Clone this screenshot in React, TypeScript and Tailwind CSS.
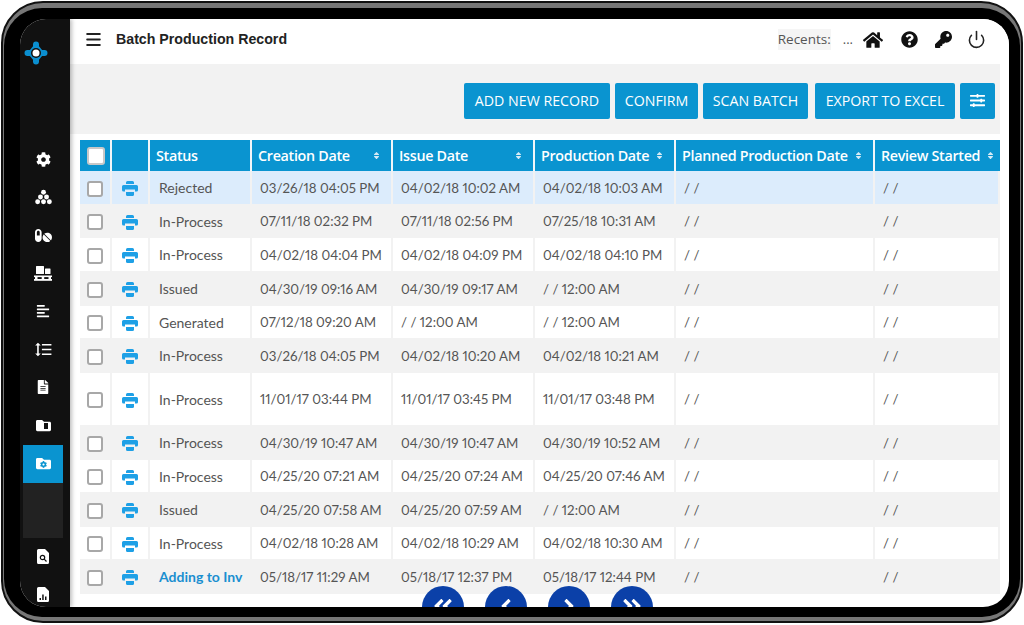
import { FaCog, FaHome, FaKey, FaPills, FaAlignLeft, FaQuestionCircle, FaSlidersH, FaSort, FaFileAlt, FaFolder, FaAngleLeft, FaAngleRight, FaAngleDoubleLeft, FaAngleDoubleRight } from "react-icons/fa";
import { MdFormatLineSpacing } from "react-icons/md";
import { Menu, Power } from "lucide-react";

const rows = [
  { status: "Rejected", created: "03/26/18 04:05 PM", issued: "04/02/18 10:02 AM", produced: "04/02/18 10:03 AM", h: "h-[34px]", bg: "bg-[#dcecfc]" },
  { status: "In-Process", created: "07/11/18 02:32 PM", issued: "07/11/18 02:56 PM", produced: "07/25/18 10:31 AM", h: "h-[33px]", bg: "bg-[#f2f2f2]" },
  { status: "In-Process", created: "04/02/18 04:04 PM", issued: "04/02/18 04:09 PM", produced: "04/02/18 04:10 PM", h: "h-[34px]", bg: "bg-white" },
  { status: "Issued", created: "04/30/19 09:16 AM", issued: "04/30/19 09:17 AM", produced: "/ / 12:00 AM", h: "h-[34px]", bg: "bg-[#f2f2f2]" },
  { status: "Generated", created: "07/12/18 09:20 AM", issued: "/ / 12:00 AM", produced: "/ / 12:00 AM", h: "h-[33px]", bg: "bg-white" },
  { status: "In-Process", created: "03/26/18 04:05 PM", issued: "04/02/18 10:20 AM", produced: "04/02/18 10:21 AM", h: "h-[34px]", bg: "bg-[#f2f2f2]" },
  { status: "In-Process", created: "11/01/17 03:44 PM", issued: "11/01/17 03:45 PM", produced: "11/01/17 03:48 PM", h: "h-[53px]", bg: "bg-white" },
  { status: "In-Process", created: "04/30/19 10:47 AM", issued: "04/30/19 10:47 AM", produced: "04/30/19 10:52 AM", h: "h-[34px]", bg: "bg-[#f2f2f2]" },
  { status: "In-Process", created: "04/25/20 07:21 AM", issued: "04/25/20 07:24 AM", produced: "04/25/20 07:46 AM", h: "h-[33px]", bg: "bg-white" },
  { status: "Issued", created: "04/25/20 07:58 AM", issued: "04/25/20 07:59 AM", produced: "/ / 12:00 AM", h: "h-[34px]", bg: "bg-[#f2f2f2]" },
  { status: "In-Process", created: "04/02/18 10:28 AM", issued: "04/02/18 10:29 AM", produced: "04/02/18 10:30 AM", h: "h-[33px]", bg: "bg-white" },
  { status: "Adding to Inv", created: "05/18/17 11:29 AM", issued: "05/18/17 12:37 PM", produced: "05/18/17 12:44 PM", h: "h-[34px]", bg: "bg-[#f2f2f2]" },
];

function Logo() {
  return (
    <svg viewBox="0 0 24 24" className="w-[24px] h-[24px]">
      <path d="M12 3.500 L12 20.500 M3.500 12 L20.500 12" stroke="#0b8fd0" strokeWidth="6" strokeLinecap="round" />
      <path d="M12 4 18.500 12 12 20 5.500 12z" fill="#0b8fd0" stroke="#0b8fd0" strokeWidth="3" strokeLinejoin="round" />
      <circle cx="12" cy="12" r="5" fill="#111" />
      <circle cx="12" cy="12" r="3.500" fill="#fff" />
    </svg>
  );
}

function Dots() {
  return (
    <svg viewBox="0 0 18 16" className="w-[17px] h-[16px]" fill="#fff">
      <circle cx="9" cy="3" r="2.600" />
      <circle cx="5.800" cy="8" r="2.600" />
      <circle cx="12.200" cy="8" r="2.600" />
      <circle cx="2.800" cy="13" r="2.600" />
      <circle cx="9" cy="13" r="2.600" />
      <circle cx="15.200" cy="13" r="2.600" />
    </svg>
  );
}

function Pallet() {
  return (
    <svg viewBox="0 0 18 15" className="w-[18px] h-[15px]" fill="#fff">
      <rect x="2" y="0" width="8" height="8" rx="0.500" />
      <rect x="11" y="2.500" width="5.500" height="5.500" rx="0.500" />
      <rect x="0" y="9.500" width="18" height="1.600" />
      <rect x="0" y="13" width="18" height="1.800" />
      <rect x="1" y="11" width="2.500" height="2" />
      <rect x="7.700" y="11" width="2.500" height="2" />
      <rect x="14.500" y="11" width="2.500" height="2" />
    </svg>
  );
}

function PrintIcon() {
  return (
    <svg viewBox="0 0 16 15" className="w-[16px] h-[15px]" fill="#1ea0e6">
      <path d="M4 3V1.500A1.500 1.500 0 0 1 5.500 0h5A1.500 1.500 0 0 1 12 1.500V3z" />
      <path d="M1.500 4h13A1.500 1.500 0 0 1 16 5.500V9a1.500 1.500 0 0 1-1.500 1.500H13V8.500H3v2H1.500A1.500 1.500 0 0 1 0 9V5.500A1.500 1.500 0 0 1 1.500 4z" />
      <path d="M4 11h8v2.500a1.500 1.500 0 0 1-1.500 1.500h-5A1.500 1.500 0 0 1 4 13.500z" />
    </svg>
  );
}

function FileIcon({ kind }: { kind: "search" | "chart" }) {
  return (
    <svg viewBox="0 0 12 15" className="w-[12px] h-[15px]">
      <path d="M0 1.500A1.500 1.500 0 0 1 1.500 0H8l4 4v9.500a1.500 1.500 0 0 1-1.500 1.500h-9A1.500 1.500 0 0 1 0 13.500z" fill="#fff" />
      {kind === "search" ? (
        <g fill="none" stroke="#111" strokeWidth="1.200">
          <circle cx="5.500" cy="8.500" r="2.200" />
          <path d="M7.200 10.200 9.500 12.500" />
        </g>
      ) : (
        <path d="M2.500 13V11h1.500v2zM5.200 13V7.500h1.500V13zM8 13V9.500h1.500V13z" fill="#111" />
      )}
    </svg>
  );
}

function FolderIcon({ kind }: { kind: "bookmark" | "cog" }) {
  return (
    <span className="relative flex items-center justify-center text-white text-[15px]">
      <FaFolder />
      {kind === "bookmark" ? (
        <span className="absolute left-[8px] top-[5px] w-[4px] h-[6px] bg-[#111]" />
      ) : (
        <FaCog className="absolute text-[#0a94d0] text-[7px] top-[5px]" />
      )}
    </span>
  );
}

function SideItem({ children, active }: { children: React.ReactNode; active?: boolean }) {
  return (
    <div className={`h-[38px] shrink-0 flex items-center justify-center pb-[2px] text-white ${active ? "bg-[#0a94d0]" : ""}`}>
      {children}
    </div>
  );
}

function Sidebar() {
  return (
    <aside className="w-[50px] shrink-0 bg-[#111] flex flex-col pl-[3px] pr-[7px] shadow-[2px_0_4px_rgba(0,0,0,0.25)] z-10">
      <div className="h-[122px] shrink-0 ml-[1px] pt-[22px]">
        <Logo />
      </div>
      <SideItem><FaCog className="text-[15px]" /></SideItem>
      <SideItem><Dots /></SideItem>
      <SideItem><FaPills className="text-[17px]" /></SideItem>
      <SideItem><Pallet /></SideItem>
      <SideItem><FaAlignLeft className="text-[14px]" /></SideItem>
      <SideItem><MdFormatLineSpacing className="text-[19px]" /></SideItem>
      <SideItem><FaFileAlt className="text-[14px]" /></SideItem>
      <SideItem><FolderIcon kind="bookmark" /></SideItem>
      <SideItem active><FolderIcon kind="cog" /></SideItem>
      <div className="h-[55px] shrink-0 bg-[#222]" />
      <SideItem><FileIcon kind="search" /></SideItem>
      <SideItem><FileIcon kind="chart" /></SideItem>
    </aside>
  );
}

function TopBar() {
  return (
    <header className="h-[45px] shrink-0 bg-white flex items-center pl-[14px] pr-[23px] pb-[4px]">
      <Menu className="w-[19px] h-[19px] text-[#222]" strokeWidth={2.4} />
      <h1 className="ml-[13px] text-[14.200px] font-bold text-[#222] font-['Liberation_Sans',sans-serif]">Batch Production Record</h1>
      <div className="ml-auto flex items-center">
        <span className="bg-[#f5f5f5] text-[13.500px] text-[#555] font-['Open_Sans',sans-serif]">Recents:</span>
        <span className="ml-[12px] text-[13px] text-[#555] font-['Open_Sans',sans-serif]">...</span>
        <FaHome className="ml-[10px] text-[20px] text-[#111]" />
        <FaQuestionCircle className="ml-[18px] text-[17px] text-[#111]" />
        <FaKey className="ml-[17px] text-[17px] text-[#111]" />
        <Power className="ml-[15px] w-[19px] h-[19px] text-[#222]" strokeWidth={2} />
      </div>
    </header>
  );
}

function ToolButton({ children, w }: { children: React.ReactNode; w: string }) {
  return (
    <button className={`${w} h-[36px] rounded-[2px] bg-[#0a94d0] text-white text-[14.200px] font-['Open_Sans',sans-serif] flex items-center justify-center pb-[1px]`}>
      {children}
    </button>
  );
}

function Th({ label, w, sort = true }: { label?: string; w: string; sort?: boolean }) {
  return (
    <th className={`${w} bg-[#0a94d0] border-r-2 border-[#f2f6f9] pl-[6px] pr-[10px] text-left text-white text-[14.300px] font-semibold font-['Open_Sans',sans-serif] tracking-[-0.3px] whitespace-nowrap last:border-r-0 last:pr-[5px]`}>
      {label && (
        <span className="flex items-center justify-between">
          {label}
          {sort && <FaSort className="text-[9px] text-[#d5eaf5]" />}
        </span>
      )}
    </th>
  );
}

function Check({ big }: { big?: boolean }) {
  return (
    <span className={`block rounded-[3px] bg-white border-2 ${big ? "w-[18px] h-[18px] border-[#c8c8c8]" : "w-[16px] h-[16px] border-[#a8a8a8]"}`} />
  );
}

function RecordTable() {
  const td = "border-r-2 border-b border-[#f2f2f2] whitespace-nowrap";
  const date = `${td} pl-[8px] pt-[2px] text-[13.300px]`;
  return (
    <table className="w-[920px] table-fixed border-separate border-spacing-0 text-[14px] text-[#555] proportional-nums font-['Lato',sans-serif]">
      <thead>
        <tr className="h-[31px]">
          <th className="w-[32px] bg-[#0a94d0] border-r-2 border-[#f2f6f9] pl-[7px]"><Check big /></th>
          <Th w="w-[38px]" />
          <Th w="w-[102px]" label="Status" sort={false} />
          <Th w="w-[141px]" label="Creation Date" />
          <Th w="w-[142px]" label="Issue Date" />
          <Th w="w-[141px]" label="Production Date" />
          <Th w="w-[199px]" label="Planned Production Date" />
          <Th w="w-[125px]" label="Review Started" />
        </tr>
      </thead>
      <tbody>
        {rows.map((r, i) => (
          <tr key={i} className={`${r.h} ${r.bg}`}>
            <td className={`${td} pl-[7px] pt-[2px]`}><Check /></td>
            <td className={`${td} pl-[10px] pt-[2px]`}><PrintIcon /></td>
            <td className={`${td} pl-[9px] ${r.status === "Adding to Inv" ? "text-[#1a8fd0] font-bold" : ""}`}>{r.status}</td>
            <td className={date}>{r.created}</td>
            <td className={date}>{r.issued}</td>
            <td className={date}>{r.produced}</td>
            <td className={date}>/ /</td>
            <td className={`${date} border-r-0`}>/ /</td>
          </tr>
        ))}
      </tbody>
    </table>
  );
}

function PageButton({ children }: { children: React.ReactNode }) {
  return (
    <button className="w-[42px] h-[42px] rounded-full bg-[#0b40a8] text-white text-[22px] flex items-center justify-center pb-[2px]">
      {children}
    </button>
  );
}

export default function App() {
  return (
    <div className="w-[1024px] h-[625px] bg-white overflow-hidden">
      <div className="w-[1022px] h-[622px] ml-[1px] mt-[1px] rounded-[42px] border-2 border-[#111] bg-[#777] pt-[5px] pl-[1px] pr-[1px] pb-[4px]">
        <div className="w-full h-full rounded-[38px] bg-black pt-[11px] pl-[16px] pr-[11px] pb-[10px]">
          <div className="relative w-full h-full rounded-[26px] overflow-hidden bg-white flex">
            <Sidebar />
            <main className="flex-1 min-w-0 flex flex-col">
              <TopBar />
              <div className="h-[70px] shrink-0 bg-[#f2f2f2] mr-[9px] flex justify-end items-start gap-[5px] pt-[19px] pr-[5px]">
                <ToolButton w="w-[146px]">ADD NEW RECORD</ToolButton>
                <ToolButton w="w-[83px]">CONFIRM</ToolButton>
                <ToolButton w="w-[105px] mr-[2px]">SCAN BATCH</ToolButton>
                <ToolButton w="w-[140px]">EXPORT TO EXCEL</ToolButton>
                <ToolButton w="w-[35px]"><FaSlidersH className="text-[15px]" /></ToolButton>
              </div>
              <div className="pt-[6px] pl-[10px]">
                <RecordTable />
              </div>
            </main>
            <div className="absolute left-[402px] bottom-[-21px] flex gap-[21px]">
              <PageButton><FaAngleDoubleLeft /></PageButton>
              <PageButton><FaAngleLeft /></PageButton>
              <PageButton><FaAngleRight /></PageButton>
              <PageButton><FaAngleDoubleRight /></PageButton>
            </div>
          </div>
        </div>
      </div>
    </div>
  );
}
